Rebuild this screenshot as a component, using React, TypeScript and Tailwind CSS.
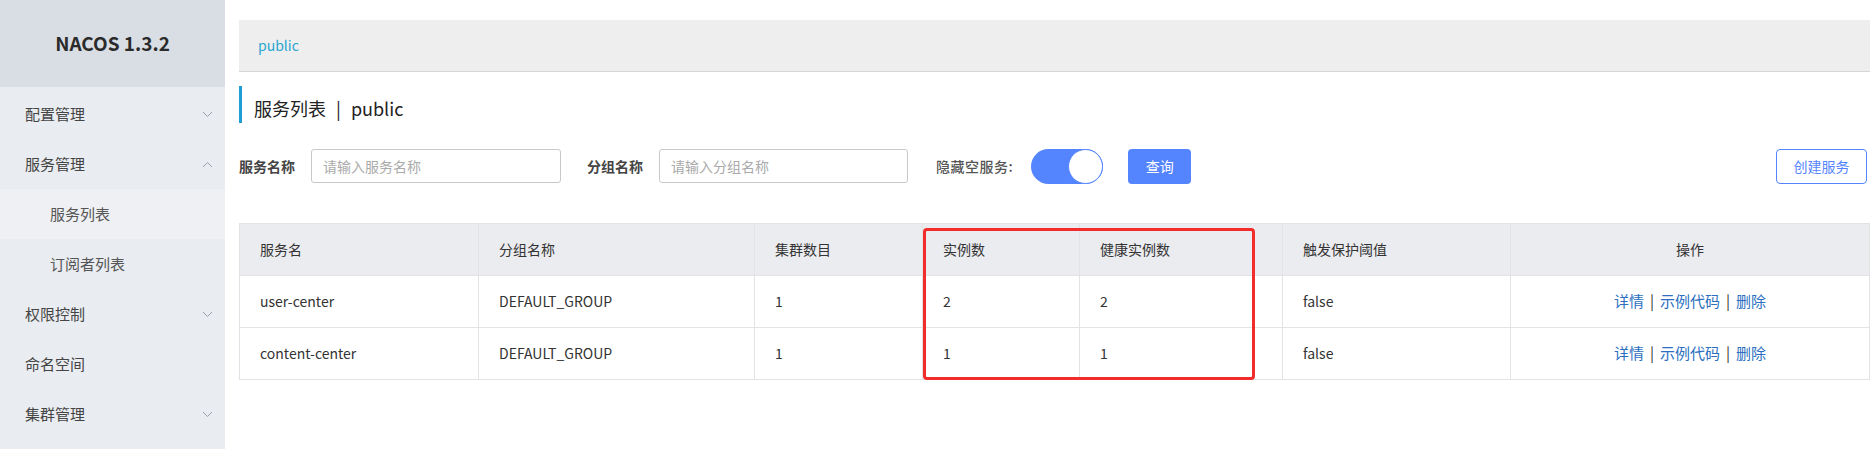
const menu = [
  { label: "配置管理", arrow: "down" },
  { label: "服务管理", arrow: "up" },
  { label: "服务列表", sub: true, active: true },
  { label: "订阅者列表", sub: true },
  { label: "权限控制", arrow: "down" },
  { label: "命名空间" },
  { label: "集群管理", arrow: "down" },
];

const rows = [
  { name: "user-center", group: "DEFAULT_GROUP", clusters: "1", instances: "2", healthy: "2", threshold: "false" },
  { name: "content-center", group: "DEFAULT_GROUP", clusters: "1", instances: "1", healthy: "1", threshold: "false" },
];

function Chevron({ up }: { up?: boolean }) {
  return (
    <svg width="11" height="7" viewBox="0 0 11 7" className="text-[#9aa0a8]">
      <polyline
        points={up ? "1,6 5.5,1.5 10,6" : "1,1 5.5,5.5 10,1"}
        fill="none"
        stroke="currentColor"
        strokeWidth="1"
      />
    </svg>
  );
}

export default function App() {
  return (
    <div className="flex h-[449px] w-full bg-white font-['Noto_Sans_CJK_SC','Liberation_Sans',sans-serif] text-[#333]">
      {/* sidebar */}
      <aside className="flex w-[225px] shrink-0 flex-col bg-[#e9ecf0]">
        <div className="flex h-[87px] items-center justify-center bg-[#d9dee4] text-[19px] font-bold text-[#2b2b2b]">
          NACOS 1.3.2
        </div>
        <div className="pt-[2px]">
          {menu.map((m) => (
            <div
              key={m.label}
              className={`flex h-[50px] items-center justify-between pr-[12px] text-[15px] ${
                m.sub ? "pl-[50px] text-[#555]" : "pl-[25px] text-[#444]"
              } ${m.active ? "bg-[#eef0f3]" : ""}`}
            >
              <span>{m.label}</span>
              {m.arrow && <Chevron up={m.arrow === "up"} />}
            </div>
          ))}
        </div>
      </aside>

      {/* main */}
      <main className="min-w-0 flex-1 pl-[14px] pr-[6px] pt-[20px]">
        <div className="flex h-[52px] items-center border-b border-[#d6d6d6] bg-[#eeeeee] pl-[19px] text-[14px] text-[#2aa6d0]">
          public
        </div>

        <div className="mt-[14px] flex h-[37px] items-center border-l-[3px] border-[#1d9fd3] pl-[12px] pt-[8px] text-[18px] text-[#222]">
          服务列表 <span className="mx-[10px]">|</span> public
        </div>

        <div className="mt-[26px] flex h-[34px] items-center text-[14px]">
          <span className="font-bold text-[#444]">服务名称</span>
          <div className="ml-[16px] flex h-[34px] w-[250px] items-center rounded-[3px] border border-[#c9c9c9] pl-[11px] text-[#aaa]">
            请输入服务名称
          </div>
          <span className="ml-[26px] font-bold text-[#444]">分组名称</span>
          <div className="ml-[16px] flex h-[34px] w-[249px] items-center rounded-[3px] border border-[#c9c9c9] pl-[11px] text-[#aaa]">
            请输入分组名称
          </div>
          <span className="ml-[28px] font-medium tracking-[0.5px] text-[#555]">隐藏空服务:</span>
          <div className="ml-[18px] flex h-[35px] w-[72px] items-center justify-end rounded-full bg-[#5584ff]">
            <div className="h-[35px] w-[35px] rounded-full border border-[#5584ff] bg-white" />
          </div>
          <button className="ml-[25px] h-[35px] w-[63px] rounded-[4px] bg-[#5584ff] text-[14px] text-white">
            查询
          </button>
          <button className="ml-auto mr-[3px] h-[35px] w-[91px] rounded-[4px] border border-[#5584ff] bg-white text-[14px] text-[#5584ff]">
            创建服务
          </button>
        </div>

        <div className="relative mt-[40px]">
          <table className="w-full table-fixed border-collapse border border-[#e3e3e3] text-[14px]">
            <colgroup>
              <col className="w-[239px]" />
              <col className="w-[276px]" />
              <col className="w-[168px]" />
              <col className="w-[157px]" />
              <col className="w-[203px]" />
              <col className="w-[228px]" />
              <col />
            </colgroup>
            <thead>
              <tr className="h-[52px] bg-[#ebecf0] text-left text-[#333]">
                <th className="border border-[#e3e3e3] pl-[20px] font-normal">服务名</th>
                <th className="border border-[#e3e3e3] pl-[20px] font-normal">分组名称</th>
                <th className="border border-[#e3e3e3] pl-[20px] font-normal">集群数目</th>
                <th className="border border-[#e3e3e3] pl-[20px] font-normal">实例数</th>
                <th className="border border-[#e3e3e3] pl-[20px] font-normal">健康实例数</th>
                <th className="border border-[#e3e3e3] pl-[20px] font-normal">触发保护阈值</th>
                <th className="border border-[#e3e3e3] text-center font-normal">操作</th>
              </tr>
            </thead>
            <tbody>
              {rows.map((r) => (
                <tr key={r.name} className="h-[52px] text-[#333]">
                  <td className="border border-[#e3e3e3] pl-[20px]">{r.name}</td>
                  <td className="border border-[#e3e3e3] pl-[20px]">{r.group}</td>
                  <td className="border border-[#e3e3e3] pl-[20px]">{r.clusters}</td>
                  <td className="border border-[#e3e3e3] pl-[20px]">{r.instances}</td>
                  <td className="border border-[#e3e3e3] pl-[20px]">{r.healthy}</td>
                  <td className="border border-[#e3e3e3] pl-[20px]">{r.threshold}</td>
                  <td className="border border-[#e3e3e3] text-center text-[15px] text-[#2c6fc0]">
                    详情<span className="mx-[6px] text-[#333]">|</span>示例代码
                    <span className="mx-[6px] text-[#333]">|</span>删除
                  </td>
                </tr>
              ))}
            </tbody>
          </table>
          {/* red highlight box */}
          <div className="pointer-events-none absolute left-[684px] top-[5px] h-[152px] w-[332px] rounded-[4px] border-[3px] border-[#f22b2b]" />
        </div>
      </main>
    </div>
  );
}
